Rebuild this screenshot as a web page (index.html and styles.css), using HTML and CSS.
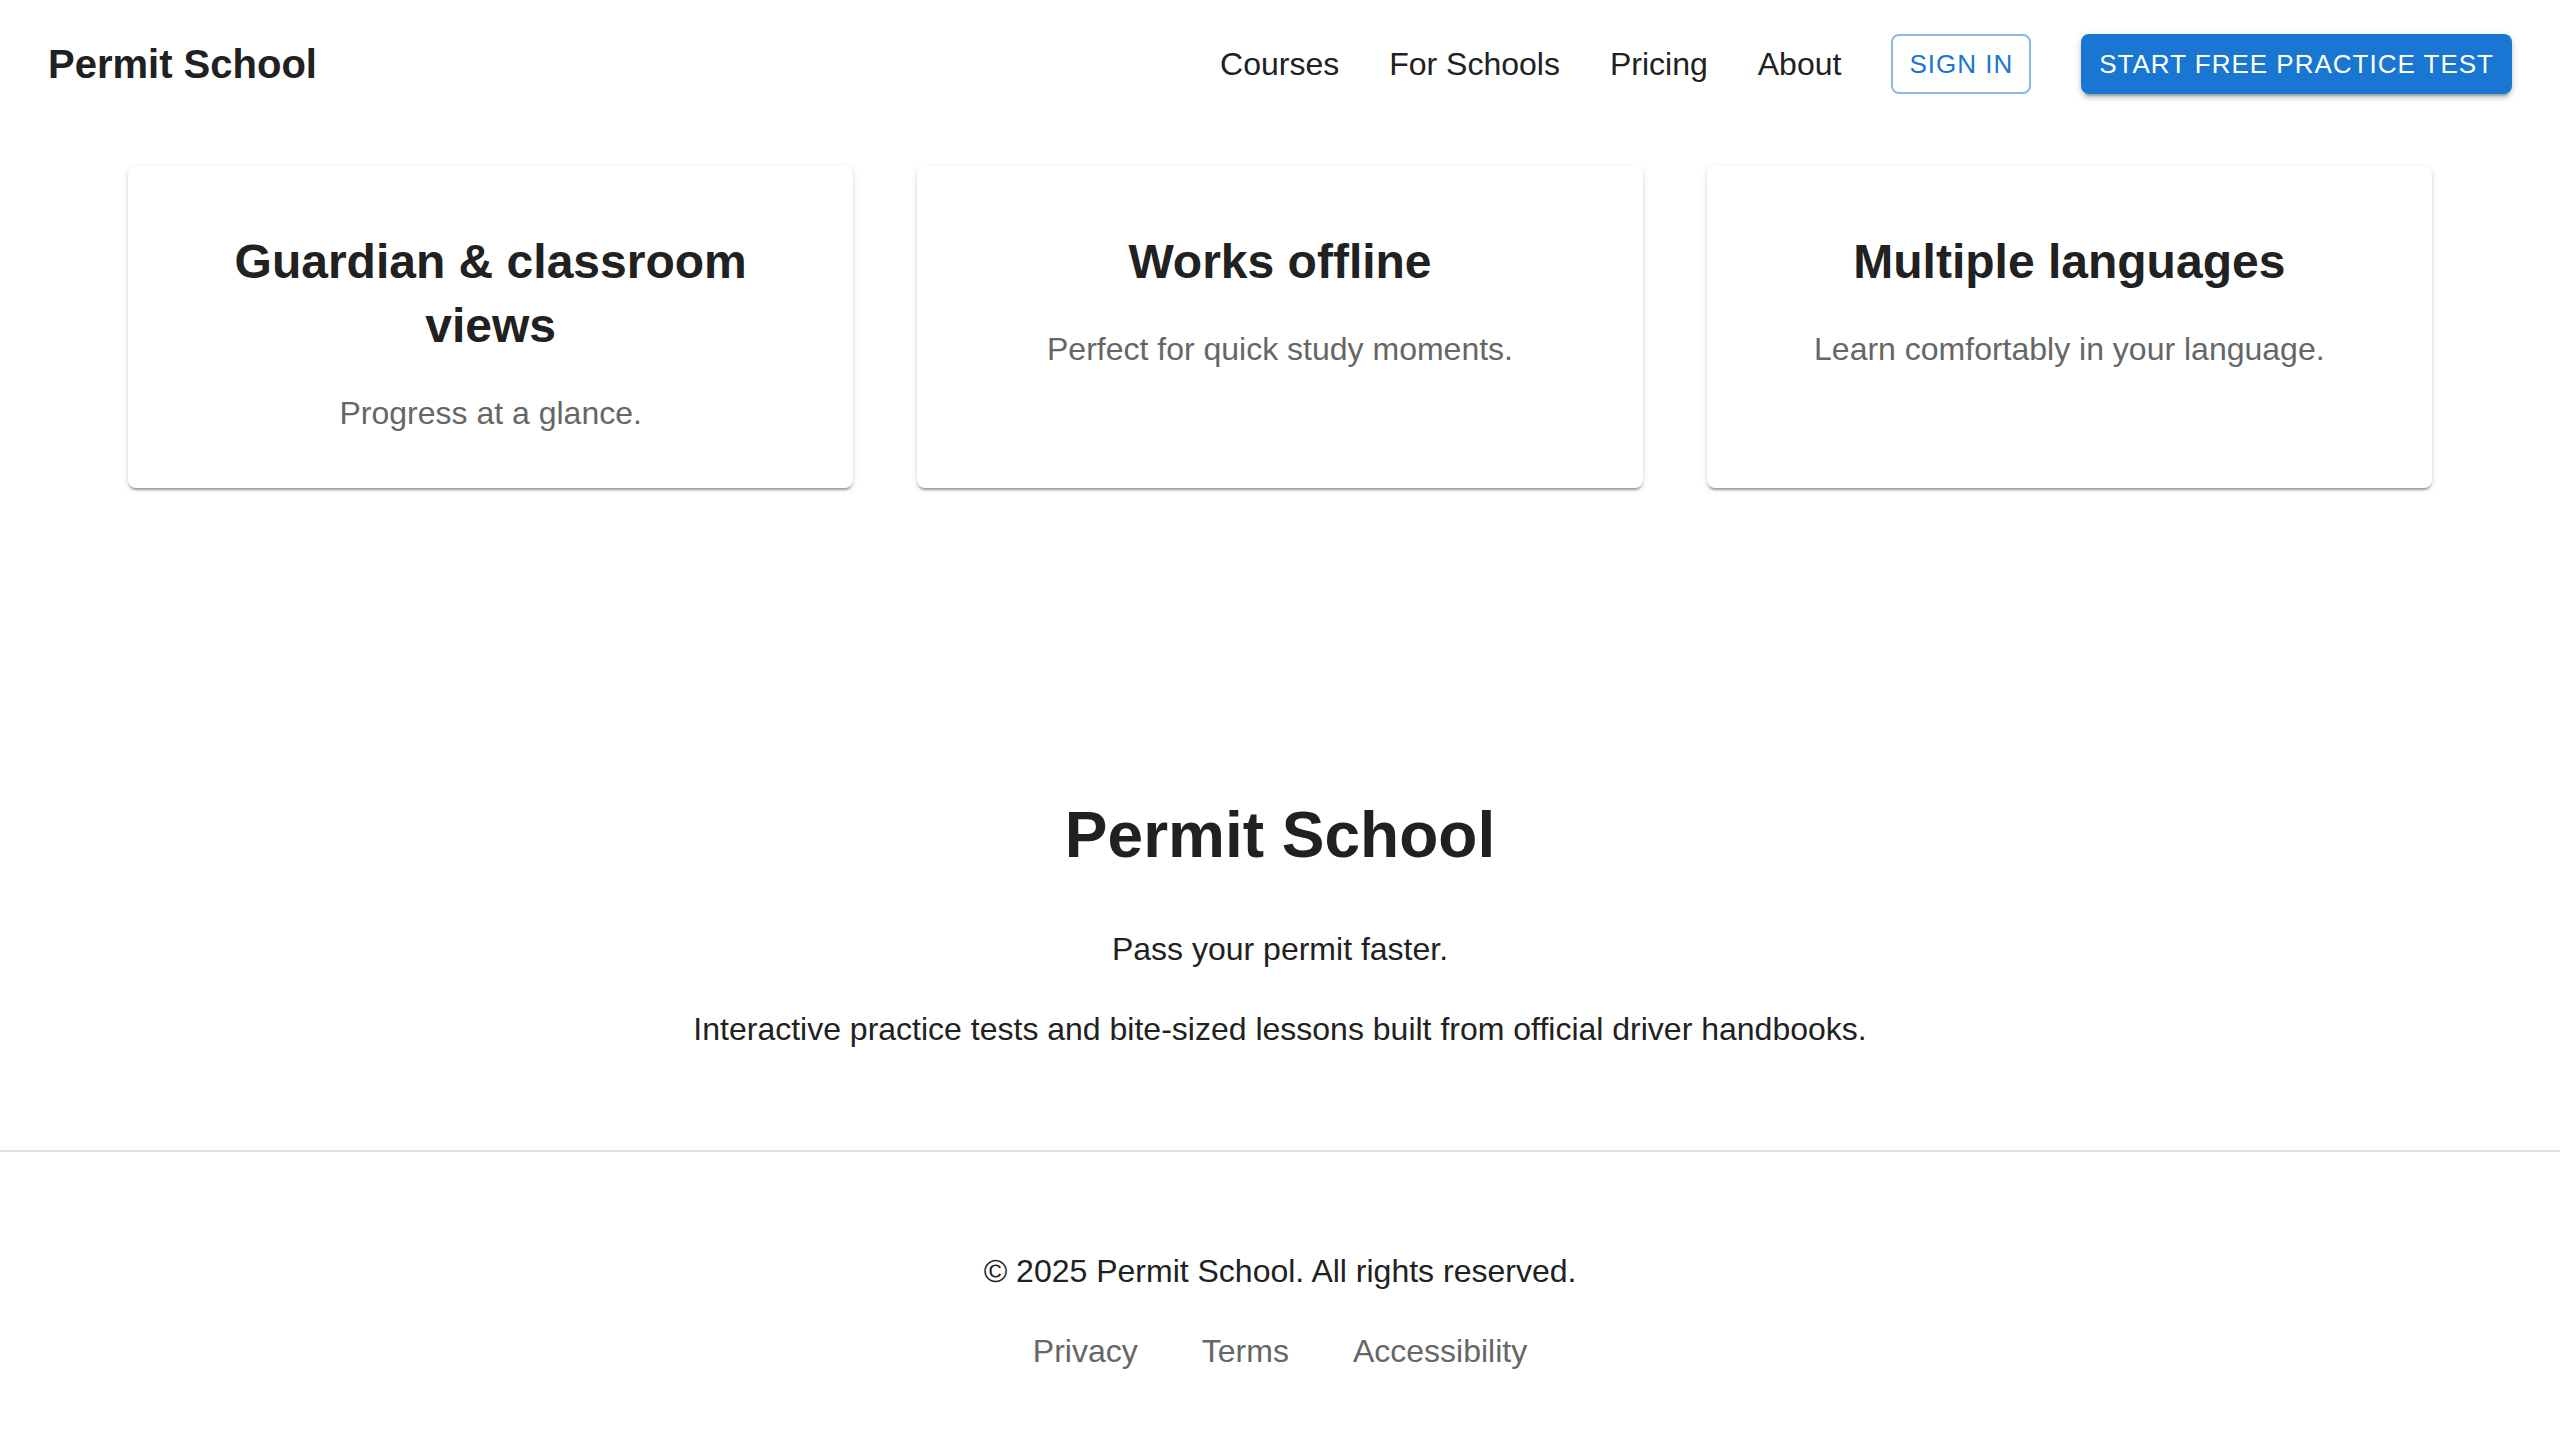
FILE: index.html
```html
<!DOCTYPE html>
<html lang="en">
<head>
  <meta charset="utf-8">
  <meta name="viewport" content="width=device-width, initial-scale=1">
  <title>Permit School</title>
  <link rel="stylesheet" href="styles.css">
</head>
<body>
  <header class="site-header">
    <a class="brand" href="#">Permit School</a>
    <nav class="site-nav" aria-label="Main">
      <a class="nav-link" href="#courses">Courses</a>
      <a class="nav-link" href="#schools">For Schools</a>
      <a class="nav-link" href="#pricing">Pricing</a>
      <a class="nav-link" href="#about">About</a>
      <button class="button button-outlined" type="button">Sign in</button>
      <button class="button button-contained" type="button">Start free practice test</button>
    </nav>
  </header>

  <main>
    <section class="features" aria-label="Features">
      <article class="card">
        <h2 class="card-title">Guardian &amp; classroom views</h2>
        <p class="card-text">Progress at a glance.</p>
      </article>
      <article class="card">
        <h2 class="card-title">Works offline</h2>
        <p class="card-text">Perfect for quick study moments.</p>
      </article>
      <article class="card">
        <h2 class="card-title">Multiple languages</h2>
        <p class="card-text">Learn comfortably in your language.</p>
      </article>
    </section>

    <section class="intro">
      <h1 class="intro-title">Permit School</h1>
      <p class="intro-text">Pass your permit faster.</p>
      <p class="intro-text">Interactive practice tests and bite-sized lessons built from official driver handbooks.</p>
    </section>
  </main>

  <footer class="site-footer">
    <p class="copyright">© 2025 Permit School. All rights reserved.</p>
    <nav class="footer-links" aria-label="Legal">
      <a class="footer-link" href="#privacy">Privacy</a>
      <a class="footer-link" href="#terms">Terms</a>
      <a class="footer-link" href="#accessibility">Accessibility</a>
    </nav>
  </footer>
</body>
</html>
```
FILE: styles.css
```css
*,
*::before,
*::after {
  box-sizing: border-box;
}

body {
  margin: 0;
  background: #fff;
  color: #212121;
  font-family: "Liberation Sans", Helvetica, Arial, sans-serif;
  font-size: 32px;
  line-height: 48px;
}

h1,
h2,
p {
  margin: 0;
}

a {
  color: inherit;
  text-decoration: none;
}

.site-header {
  display: flex;
  align-items: center;
  justify-content: space-between;
  min-height: 128px;
  padding: 0 48px;
}

.brand {
  font-size: 40px;
  font-weight: 700;
  line-height: 64px;
}

.site-nav {
  display: flex;
  align-items: center;
  gap: 50px;
}

.button {
  padding: 8px 18px;
  border: 0;
  border-radius: 8px;
  font-family: inherit;
  font-size: 26px;
  line-height: 44px;
  letter-spacing: 1px;
  text-transform: uppercase;
  cursor: pointer;
}

.button-outlined {
  padding: 6px 16px;
  border: 2px solid rgba(25, 118, 210, 0.5);
  background: transparent;
  color: #1976d2;
}

.button-contained {
  background: #1976d2;
  color: #fff;
  box-shadow:
    0 6px 2px -4px rgba(0, 0, 0, 0.2),
    0 4px 4px 0 rgba(0, 0, 0, 0.14),
    0 2px 10px 0 rgba(0, 0, 0, 0.12);
}

.features {
  display: grid;
  grid-template-columns: repeat(3, 1fr);
  gap: 64px;
  max-width: 2400px;
  margin: 0 auto;
  padding: 38px 48px 160px;
  text-align: center;
}

.card {
  display: flex;
  flex-direction: column;
  gap: 31px;
  padding: 64px 64px 51px;
  border-radius: 8px;
  background: #fff;
  box-shadow:
    0 4px 2px -2px rgba(0, 0, 0, 0.2),
    0 2px 2px 0 rgba(0, 0, 0, 0.14),
    0 2px 6px 0 rgba(0, 0, 0, 0.12);
}

.card-title {
  font-size: 48px;
  font-weight: 700;
  line-height: 64px;
}

.card-text,
.footer-link {
  color: #666;
}

.intro {
  display: flex;
  flex-direction: column;
  gap: 32px;
  padding: 147px 48px 97px;
  text-align: center;
}

.intro-title {
  margin-bottom: 18px;
  font-size: 64px;
  font-weight: 700;
  line-height: 80px;
}

.site-footer {
  display: flex;
  flex-direction: column;
  align-items: center;
  gap: 32px;
  padding: 95px 48px 64px;
  border-top: 2px solid #e0e0e0;
}

.footer-links {
  display: flex;
  gap: 64px;
}
```
